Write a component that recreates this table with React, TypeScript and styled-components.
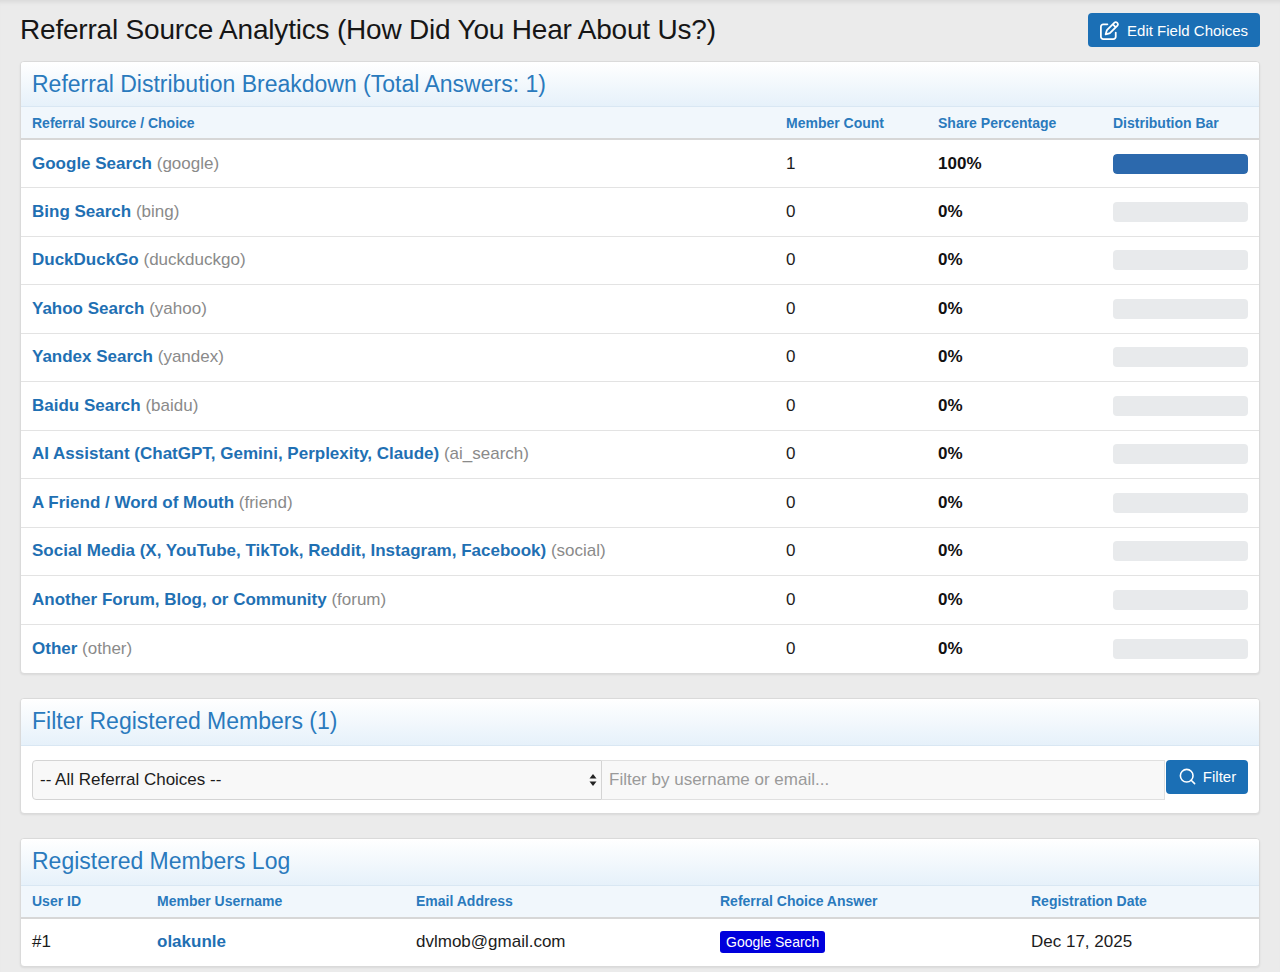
import styled, { createGlobalStyle } from "styled-components"
import { FaRegPenToSquare } from "react-icons/fa6"
import { Search } from "lucide-react"

const Colors = {
    Page: "#ebebeb",
    Link: "#1f70b3",
    Title: "#2a7abd",
    Button: "#1b6fb5",
    Text: "#1c1c1c",
    Muted: "#8a8a8a",
    Line: "#e3e3e3",
}

const GlobalStyle = createGlobalStyle`
    * {
        box-sizing: border-box;
    }
    body {
        margin: 0;
        background: ${Colors.Page};
        font-family: "Liberation Sans", Arial, Helvetica, sans-serif;
        color: ${Colors.Text};
    }
`

const sources = [
    { label: "Google Search", key: "google", count: 1, pct: 100 },
    { label: "Bing Search", key: "bing", count: 0, pct: 0 },
    { label: "DuckDuckGo", key: "duckduckgo", count: 0, pct: 0 },
    { label: "Yahoo Search", key: "yahoo", count: 0, pct: 0 },
    { label: "Yandex Search", key: "yandex", count: 0, pct: 0 },
    { label: "Baidu Search", key: "baidu", count: 0, pct: 0 },
    { label: "AI Assistant (ChatGPT, Gemini, Perplexity, Claude)", key: "ai_search", count: 0, pct: 0 },
    { label: "A Friend / Word of Mouth", key: "friend", count: 0, pct: 0 },
    { label: "Social Media (X, YouTube, TikTok, Reddit, Instagram, Facebook)", key: "social", count: 0, pct: 0 },
    { label: "Another Forum, Blog, or Community", key: "forum", count: 0, pct: 0 },
    { label: "Other", key: "other", count: 0, pct: 0 },
]

const members = [
    { id: 1, username: "olakunle", email: "dvlmob@gmail.com", choice: "Google Search", date: "Dec 17, 2025" },
]

function App() {
    return (
        <>
            <GlobalStyle />
            <Page>
                <TopBar>
                    <PageTitle>Referral Source Analytics (How Did You Hear About Us?)</PageTitle>
                    <PrimaryButton>
                        <FaRegPenToSquare />
                        Edit Field Choices
                    </PrimaryButton>
                </TopBar>

                <Card>
                    <CardHeader>
                        <CardTitle>Referral Distribution Breakdown (Total Answers: 1)</CardTitle>
                    </CardHeader>
                    <Table>
                        <colgroup>
                            <col style={{ width: 754 }} />
                            <col style={{ width: 152 }} />
                            <col style={{ width: 175 }} />
                            <col />
                        </colgroup>
                        <thead>
                            <tr>
                                <Th>Referral Source / Choice</Th>
                                <Th>Member Count</Th>
                                <Th>Share Percentage</Th>
                                <Th>Distribution Bar</Th>
                            </tr>
                        </thead>
                        <tbody>
                            {sources.map((s) => (
                                <tr key={s.key}>
                                    <Td>
                                        <ChoiceName>{s.label}</ChoiceName> <ChoiceKey>({s.key})</ChoiceKey>
                                    </Td>
                                    <Td>{s.count}</Td>
                                    <Td>
                                        <Percent>{s.pct}%</Percent>
                                    </Td>
                                    <Td>
                                        <BarTrack>
                                            <BarFill style={{ width: `${s.pct}%` }} />
                                        </BarTrack>
                                    </Td>
                                </tr>
                            ))}
                        </tbody>
                    </Table>
                </Card>

                <Card>
                    <CardHeader $tall>
                        <CardTitle>Filter Registered Members (1)</CardTitle>
                    </CardHeader>
                    <FilterBody>
                        <SelectWrap>
                            <Select defaultValue="">
                                <option value="">-- All Referral Choices --</option>
                            </Select>
                            <SelectArrows viewBox="0 0 8 14">
                                <path d="M4 1 L7.5 5.5 H0.5 Z" fill="#222" />
                                <path d="M4 13 L7.5 8.5 H0.5 Z" fill="#222" />
                            </SelectArrows>
                        </SelectWrap>
                        <SearchInput placeholder="Filter by username or email..." />
                        <FilterButton>
                            <Search size={19} strokeWidth={2} />
                            Filter
                        </FilterButton>
                    </FilterBody>
                </Card>

                <Card>
                    <CardHeader $tall>
                        <CardTitle>Registered Members Log</CardTitle>
                    </CardHeader>
                    <Table>
                        <colgroup>
                            <col style={{ width: 125 }} />
                            <col style={{ width: 259 }} />
                            <col style={{ width: 304 }} />
                            <col style={{ width: 311 }} />
                            <col />
                        </colgroup>
                        <thead>
                            <tr>
                                <Th>User ID</Th>
                                <Th>Member Username</Th>
                                <Th>Email Address</Th>
                                <Th>Referral Choice Answer</Th>
                                <Th>Registration Date</Th>
                            </tr>
                        </thead>
                        <tbody>
                            {members.map((m) => (
                                <tr key={m.id}>
                                    <Td>#{m.id}</Td>
                                    <Td>
                                        <ChoiceName>{m.username}</ChoiceName>
                                    </Td>
                                    <Td>{m.email}</Td>
                                    <Td>
                                        <Badge>{m.choice}</Badge>
                                    </Td>
                                    <Td>{m.date}</Td>
                                </tr>
                            ))}
                        </tbody>
                    </Table>
                </Card>
            </Page>
        </>
    )
}

export default App

const Page = styled.div`
    min-height: 100vh;
    padding: 0 20px 20px;
    background: ${Colors.Page};
    box-shadow: inset 0 5px 4px -3px rgba(0, 0, 0, 0.08);
`

const TopBar = styled.div`
    height: 61px;
    display: flex;
    justify-content: space-between;
    align-items: center;
    padding-bottom: 1px;
`

const PageTitle = styled.h1`
    margin: 0;
    font-size: 28px;
    font-weight: normal;
    color: #161616;
    letter-spacing: -0.2px;
`

const PrimaryButton = styled.button`
    height: 34px;
    display: flex;
    align-items: center;
    gap: 8px;
    padding: 0 12px;
    border: none;
    border-radius: 4px;
    background: ${Colors.Button};
    color: #fff;
    font-family: inherit;
    font-size: 15px;
    cursor: pointer;

    svg {
        font-size: 19px;
    }
`

const Card = styled.div`
    background: #fff;
    border: 1px solid #dadada;
    border-radius: 4px;
    box-shadow: 0 1px 2px rgba(0, 0, 0, 0.08);
    margin-bottom: 24px;
    overflow: hidden;
`

const CardHeader = styled.div<{ $tall?: boolean }>`
    height: ${(p) => (p.$tall ? "47px" : "45px")};
    display: flex;
    align-items: center;
    padding: 0 11px;
    background: linear-gradient(#ffffff, #e6f1fa);
    border-bottom: 1px solid #d9e7f3;
`

const CardTitle = styled.h2`
    margin: 0;
    font-size: 23px;
    font-weight: normal;
    color: ${Colors.Title};
`

const Table = styled.table`
    width: 100%;
    border-collapse: collapse;
    table-layout: fixed;
`

const Th = styled.th`
    height: 32px;
    padding: 0 11px;
    text-align: left;
    font-size: 14px;
    font-weight: bold;
    color: ${Colors.Title};
    background: #f1f7fc;
    border-bottom: 2px solid #d7d7d7;
`

const Td = styled.td`
    height: 48.5px;
    padding: 0 11px;
    font-size: 17px;
    color: ${Colors.Text};
    border-bottom: 1px solid ${Colors.Line};

    tr:last-child > & {
        border-bottom: none;
    }
`

const ChoiceName = styled.span`
    font-weight: bold;
    color: ${Colors.Link};
`

const ChoiceKey = styled.span`
    color: ${Colors.Muted};
`

const Percent = styled.span`
    font-weight: bold;
    color: #111;
`

const BarTrack = styled.div`
    width: 100%;
    height: 20px;
    border-radius: 4px;
    background: #e8eaec;
    overflow: hidden;
`

const BarFill = styled.div`
    height: 100%;
    background: #2c69ad;
    border-radius: 4px;
`

const FilterBody = styled.div`
    display: flex;
    align-items: flex-start;
    padding: 14px 11px 13px;
`

const SelectWrap = styled.div`
    position: relative;
    width: 570px;
    height: 40px;
`

const Select = styled.select`
    width: 100%;
    height: 100%;
    appearance: none;
    padding: 0 24px 0 7px;
    border: 1px solid #d4d4d4;
    border-radius: 4px 0 0 4px;
    background: #f8f8f8;
    font-family: inherit;
    font-size: 17px;
    color: ${Colors.Text};
    outline: none;
`

const SelectArrows = styled.svg`
    position: absolute;
    right: 5px;
    top: 13px;
    width: 8px;
    height: 14px;
    pointer-events: none;
`

const SearchInput = styled.input`
    flex: 1;
    height: 40px;
    padding: 0 7px;
    border: 1px solid #e0e0e0;
    border-left: none;
    background: #f8f8f8;
    font-family: inherit;
    font-size: 17px;
    color: ${Colors.Text};
    outline: none;

    &::placeholder {
        color: #9a9a9a;
    }
`

const FilterButton = styled.button`
    width: 82px;
    height: 34px;
    display: flex;
    align-items: center;
    justify-content: center;
    gap: 6px;
    margin-left: 1px;
    border: none;
    border-radius: 4px;
    background: ${Colors.Button};
    color: #fff;
    font-family: inherit;
    font-size: 15px;
    cursor: pointer;
`

const Badge = styled.span`
    display: inline-block;
    padding: 3px 6px;
    border-radius: 3px;
    background: #0000dc;
    color: #fff;
    font-size: 14px;
`
